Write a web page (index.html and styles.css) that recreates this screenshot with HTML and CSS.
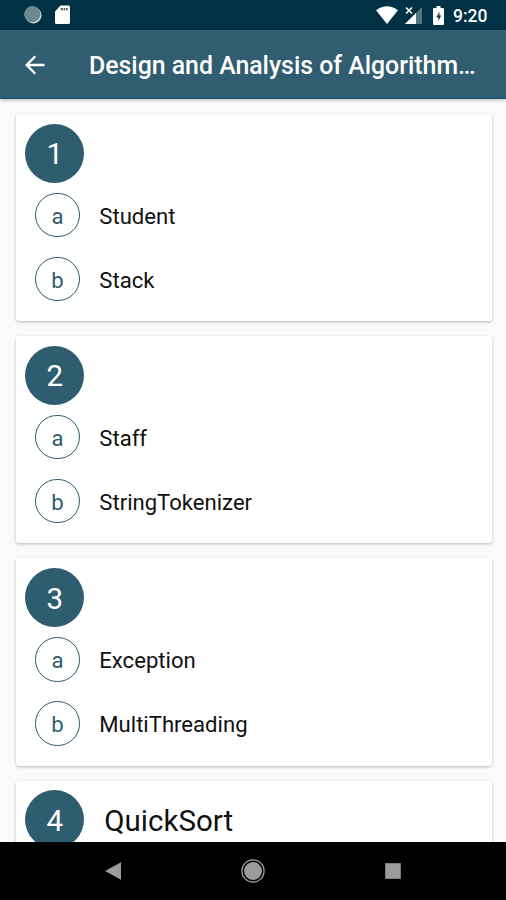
FILE: index.html
```html
<!DOCTYPE html>
<html lang="en">
<head>
<meta charset="utf-8">
<title>Design and Analysis of Algorithms</title>
<link rel="stylesheet" href="styles.css">
</head>
<body>
<div class="screen">
  <header class="status">
    <svg class="status-dot" viewBox="0 0 20 20"><circle cx="10.3" cy="10.3" r="8.2" fill="#dce5e7"/><circle cx="9.3" cy="9.3" r="8.2" fill="#6c8890"/></svg>
    <svg class="status-sd" viewBox="0 0 16 20"><path d="M5.500 .5h8a1.500 1.500 0 0 1 1.500 1.500v15.500a1.500 1.500 0 0 1-1.500 1.500h-12A1.500 1.500 0 0 1 0 17.500V6.500z" fill="#fff"/><path d="M5.800 3h2v2.200h-2zM8.700 3h1.500v2.200H8.700zM11 3h1.700v2.200H11z" fill="#425560"/></svg>
    <svg class="status-wifi" viewBox="0 0 22 18"><path d="M0 4.200Q11-3.600 22 4.200L11 18z" fill="#fff"/></svg>
    <svg class="status-signal" viewBox="0 0 18 19"><path d="M17 1v17H0z" fill="#527581"/><path d="M11 7v11H0z" fill="#fff"/><path d="M1 1.500l6 6M7 1.500l-6 6" stroke="#fff" stroke-width="1.600"/></svg>
    <svg class="status-battery" viewBox="0 0 12 19"><path d="M3.500 0h4v2H10q1 0 1 1v15q0 1-1 1H1q-1 0-1-1V3q0-1 1-1h2.500z" fill="#fff"/><path d="M6.600 5.500L3.300 11.200h2V15l2.900-5.500H6.300z" fill="#073545"/></svg>
    <span class="time">9:20</span>
  </header>
  <div class="toolbar">
    <svg class="back" viewBox="0 0 20 20"><path d="M19.500 10H1.800M10.300 1.300L1.600 10l8.700 8.700" fill="none" stroke="#fff" stroke-width="2.300"/></svg>
    <h1 class="title">Design and Analysis of Algorithm…</h1>
  </div>
  <main class="list">
    <section class="card">
      <div class="head"><span class="number">1</span></div>
      <div class="item"><span class="letter">a</span><span class="name">Student</span></div>
      <div class="item"><span class="letter">b</span><span class="name">Stack</span></div>
    </section>
    <section class="card">
      <div class="head"><span class="number">2</span></div>
      <div class="item"><span class="letter">a</span><span class="name">Staff</span></div>
      <div class="item"><span class="letter">b</span><span class="name">StringTokenizer</span></div>
    </section>
    <section class="card">
      <div class="head"><span class="number">3</span></div>
      <div class="item"><span class="letter">a</span><span class="name">Exception</span></div>
      <div class="item"><span class="letter">b</span><span class="name">MultiThreading</span></div>
    </section>
    <section class="card">
      <div class="head"><span class="number">4</span><span class="topic">QuickSort</span></div>
    </section>
  </main>
  <nav class="navbar">
    <svg viewBox="0 0 26 26"><path d="M5 13L21 4.300v17.400z" fill="#9b9b9b"/></svg>
    <svg viewBox="0 0 26 26"><circle cx="13" cy="13" r="11.100" fill="none" stroke="#9b9b9b" stroke-width="1.300"/><circle cx="13" cy="13" r="9" fill="#9b9b9b"/></svg>
    <svg viewBox="0 0 26 26"><path d="M5.200 5.200h15.600v15.600H5.200z" fill="#9b9b9b"/></svg>
  </nav>
</div>
</body>
</html>
```

FILE: styles.css
```css
* { box-sizing: border-box; }

body {
  margin: 0;
  font-family: Roboto, "Liberation Sans", sans-serif;
}

svg { display: block; flex: none; }

.screen {
  display: flex;
  flex-direction: column;
  width: 506px;
  height: 900px;
  overflow: hidden;
  background: #fafafa;
}

.status {
  display: flex;
  align-items: center;
  flex: none;
  height: 30px;
  padding: 0 18px 0 23px;
  background: #003144;
}

.status-dot { width: 20px; height: 20px; }
.status-sd { width: 16px; height: 20px; margin-left: 12px; }
.status-wifi { width: 22px; height: 18px; margin-left: auto; }
.status-signal { width: 18px; height: 19px; margin-left: 7px; }
.status-battery { width: 12px; height: 19px; margin-left: 10px; }

.time {
  width: 35px;
  margin-left: 8px;
  padding-top: 2px;
  color: #fff;
  font-size: 17.5px;
  font-weight: 500;
  line-height: 20px;
  white-space: nowrap;
}

.toolbar {
  position: relative;
  z-index: 1;
  display: flex;
  align-items: center;
  flex: none;
  height: 69px;
  padding-left: 25px;
  background: #305d6f;
  border-bottom: 1px solid #194b61;
  box-shadow: 0 1px 4px rgba(0, 0, 0, .28);
}

.back { width: 20px; height: 20px; margin-top: 1px; }

.title {
  margin: 4px 0 0 44px;
  color: #fff;
  font-size: 24.850px;
  font-weight: 500;
  line-height: 32px;
  white-space: nowrap;
}

.list {
  display: flex;
  flex: 1;
  flex-direction: column;
  gap: 15px;
  min-height: 0;
  padding: 14.700px 14.500px 0 16px;
  overflow: hidden;
}

.card {
  flex: none;
  height: 207.300px;
  padding: 9.900px 9.300px 9.300px;
  background: #fff;
  border-radius: 3px;
  box-shadow: 0 1px 3px rgba(0, 0, 0, .27);
}

.head {
  display: flex;
  align-items: center;
  height: 59px;
  margin-bottom: 10px;
}

.number,
.letter {
  display: flex;
  align-items: center;
  justify-content: center;
  flex: none;
  border-radius: 50%;
}

.number {
  width: 59px;
  height: 59px;
  padding-top: 2px;
  background: #2f5d70;
  color: #fff;
  font-size: 29.500px;
}

.topic {
  margin-left: 20px;
  padding-top: 2px;
  color: #111;
  font-size: 29.500px;
}

.item {
  display: flex;
  align-items: center;
  height: 44.500px;
  margin: 0 0 19.500px 10px;
}

.letter {
  width: 44.500px;
  height: 44.500px;
  padding-top: 2px;
  border: 1.200px solid #2f5d70;
  color: #2f5d70;
  font-size: 22.100px;
}

.name {
  margin-left: 19.500px;
  padding-top: 2px;
  color: #111;
  font-size: 22.100px;
}

.navbar {
  display: flex;
  align-items: center;
  justify-content: space-between;
  flex: none;
  height: 58px;
  padding: 0 100px;
  background: #000;
}

.navbar svg { width: 26px; height: 26px; }
```
